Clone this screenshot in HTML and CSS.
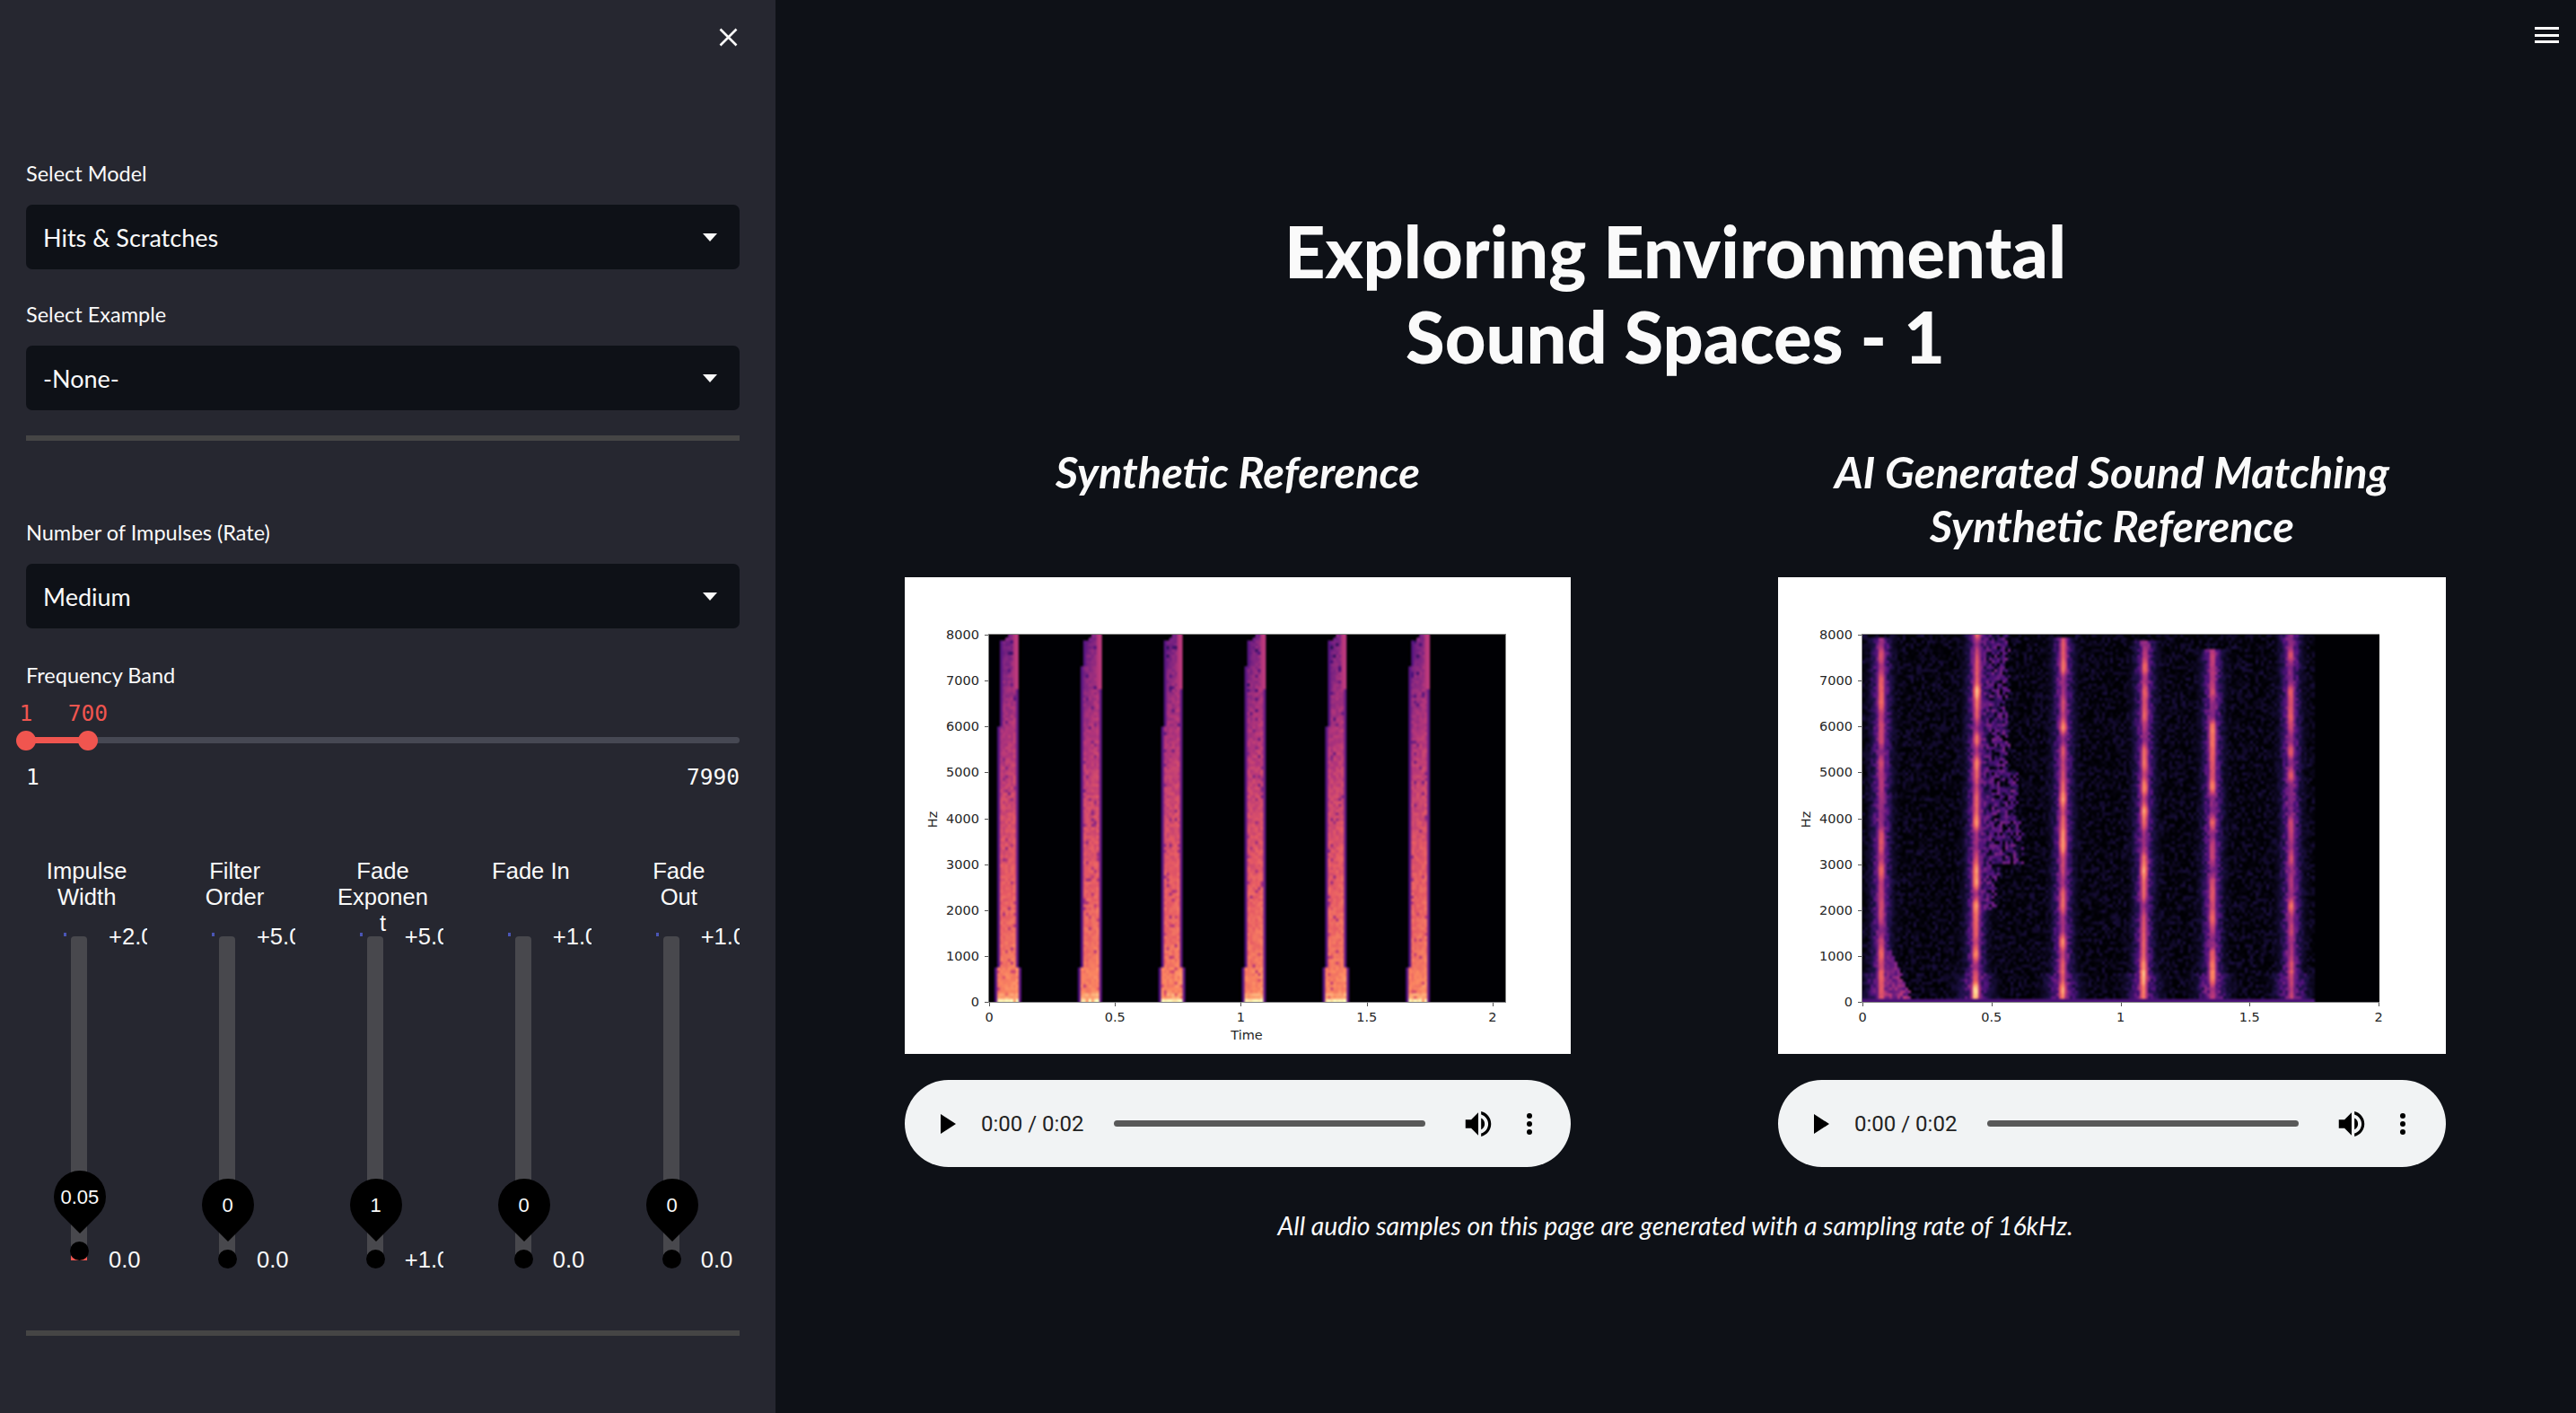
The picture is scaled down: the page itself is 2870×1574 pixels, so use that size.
FILE: index.html
```html
<!DOCTYPE html>
<html lang="en">
<head>
    <meta charset="UTF-8">
    <title>Exploring Environmental Sound Spaces - 1</title>
    <link rel="stylesheet" href="styles.css">
</head>
<body>
    <aside class="sidebar">
        <div class="close-row">
            <svg class="close-icon" viewBox="0 0 21 21"><path d="M1.5 1.5l18 18M19.5 1.5l-18 18"/></svg>
        </div>

        <div class="field first-field">
            <div class="label">Select Model</div>
            <div class="select">Hits &amp; Scratches<span class="arrow"></span></div>
        </div>
        <div class="field">
            <div class="label">Select Example</div>
            <div class="select">-None-<span class="arrow"></span></div>
        </div>
        <hr class="divider">

        <div class="field impulses-field">
            <div class="label">Number of Impulses (Rate)</div>
            <div class="select">Medium<span class="arrow"></span></div>
        </div>

        <div class="label band-label">Frequency Band</div>
        <div class="range">
            <div class="range-values">
                <span class="range-value" style="left:0px">1</span>
                <span class="range-value" style="left:69px">700</span>
            </div>
            <div class="range-track">
                <div class="range-fill" style="width:69px"></div>
                <div class="range-thumb" style="left:0px"></div>
                <div class="range-thumb" style="left:69px"></div>
            </div>
            <div class="range-limits"><span>1</span><span>7990</span></div>
        </div>

        <div class="vsliders">
            <div class="vcol">
                <div class="vtitle">Impulse Width</div>
                <div class="vslider">
                    <span class="vdot"></span>
                    <div class="vtrack vtrack-filled"></div>
                    <div class="vthumb" style="bottom:14px"><div class="bubble"><span>0.05</span></div></div>
                    <div class="vlimits"><span>+2.0</span><span>0.0</span></div>
                </div>
            </div>
            <div class="vcol">
                <div class="vtitle">Filter Order</div>
                <div class="vslider">
                    <span class="vdot"></span>
                    <div class="vtrack"></div>
                    <div class="vthumb" style="bottom:5px"><div class="bubble"><span>0</span></div></div>
                    <div class="vlimits"><span>+5.0</span><span>0.0</span></div>
                </div>
            </div>
            <div class="vcol">
                <div class="vtitle">Fade Exponent</div>
                <div class="vslider">
                    <span class="vdot"></span>
                    <div class="vtrack"></div>
                    <div class="vthumb" style="bottom:5px"><div class="bubble"><span>1</span></div></div>
                    <div class="vlimits"><span>+5.0</span><span>+1.0</span></div>
                </div>
            </div>
            <div class="vcol">
                <div class="vtitle">Fade In</div>
                <div class="vslider">
                    <span class="vdot"></span>
                    <div class="vtrack"></div>
                    <div class="vthumb" style="bottom:5px"><div class="bubble"><span>0</span></div></div>
                    <div class="vlimits"><span>+1.0</span><span>0.0</span></div>
                </div>
            </div>
            <div class="vcol">
                <div class="vtitle">Fade Out</div>
                <div class="vslider">
                    <span class="vdot"></span>
                    <div class="vtrack"></div>
                    <div class="vthumb" style="bottom:5px"><div class="bubble"><span>0</span></div></div>
                    <div class="vlimits"><span>+1.0</span><span>0.0</span></div>
                </div>
            </div>
        </div>
        <hr class="divider divider-bottom">
    </aside>

    <main class="content">
        <div class="menu-icon"><span></span><span></span><span></span></div>
        <h1>Exploring Environmental<br>Sound Spaces - 1</h1>

        <div class="columns">
            <section class="column">
                <h3>Synthetic Reference</h3>
                <figure class="plot">
                    <div class="axes" id="plotReference" data-kind="reference" data-xspan="2.05">
                        <canvas width="575" height="409"></canvas>
                        <span class="axis-name time-name">Time</span>
                        <span class="axis-name hz-name">Hz</span>
                    </div>
                </figure>
                <div class="audio">
                    <span class="play"></span>
                    <span class="time">0:00 / 0:02</span>
                    <span class="progress"></span>
                    <svg class="volume" viewBox="0 0 24 24"><path d="M3 9v6h4l5 5V4L7 9H3zm13.5 3c0-1.77-1.02-3.29-2.5-4.03v8.05c1.48-.73 2.5-2.25 2.5-4.02zM14 3.23v2.06c2.89.86 5 3.54 5 6.71s-2.11 5.85-5 6.71v2.06c4.01-.91 7-4.49 7-8.77 0-4.28-2.99-7.86-7-8.77z"/></svg>
                    <span class="dots"><i></i><i></i><i></i></span>
                </div>
            </section>

            <section class="column">
                <h3>AI Generated Sound Matching<br>Synthetic Reference</h3>
                <figure class="plot">
                    <div class="axes" id="plotGenerated" data-kind="generated" data-xspan="2">
                        <canvas width="576" height="409"></canvas>
                        <span class="axis-name hz-name">Hz</span>
                    </div>
                </figure>
                <div class="audio">
                    <span class="play"></span>
                    <span class="time">0:00 / 0:02</span>
                    <span class="progress"></span>
                    <svg class="volume" viewBox="0 0 24 24"><path d="M3 9v6h4l5 5V4L7 9H3zm13.5 3c0-1.77-1.02-3.29-2.5-4.03v8.05c1.48-.73 2.5-2.25 2.5-4.02zM14 3.23v2.06c2.89.86 5 3.54 5 6.71s-2.11 5.85-5 6.71v2.06c4.01-.91 7-4.49 7-8.77 0-4.28-2.99-7.86-7-8.77z"/></svg>
                    <span class="dots"><i></i><i></i><i></i></span>
                </div>
            </section>
        </div>

        <p class="caption">All audio samples on this page are generated with a sampling rate of 16kHz.</p>
    </main>

    <script src="spectrogram.js"></script>
</body>
</html>
```

FILE: styles.css
```css
* {
    box-sizing: border-box;
}
html, body {
    margin: 0;
    height: 100%;
}
body {
    display: flex;
    height: 1574px;
    overflow: hidden;
    background-color: #0e1117;
    color: #fafafa;
    font-family: Lato, "Noto Sans", sans-serif;
}

/* sidebar */
.sidebar {
    width: 864px;
    flex: none;
    padding: 0 40px 0 29px;
    background-color: #262730;
}
.close-row {
    display: flex;
    justify-content: flex-end;
    padding: 31px 2px 0 0;
    height: 175px;
}
.close-icon {
    width: 21px;
    height: 21px;
    fill: none;
    stroke: #fafafa;
    stroke-width: 2.6;
}
.label {
    height: 36px;
    line-height: 36px;
    font-size: 23.5px;
}
.field {
    margin-bottom: 32px;
}
.select {
    display: flex;
    align-items: center;
    justify-content: space-between;
    height: 72px;
    margin-top: 17px;
    padding: 0 25px 0 19px;
    background-color: #0e1117;
    border-radius: 7px;
    font-size: 27px;
}
.arrow {
    width: 0;
    height: 0;
    border-left: 8px solid transparent;
    border-right: 8px solid transparent;
    border-top: 9px solid #fafafa;
}
.divider {
    height: 6px;
    margin: -4px 0 0;
    border: none;
    background-color: #454545;
}
.impulses-field {
    margin-top: 84px;
    margin-bottom: 34px;
}

/* range slider */
.range {
    font-family: "DejaVu Sans Mono", monospace;
    font-size: 24.5px;
}
.range-values {
    position: relative;
    height: 30px;
    margin-top: 10px;
    line-height: 30px;
    color: #f0554f;
}
.range-value {
    position: absolute;
    transform: translateX(-50%);
}
.range-track {
    position: relative;
    height: 7px;
    margin-top: 11px;
    background-color: #464853;
    border-radius: 4px;
}
.range-fill {
    height: 100%;
    background-color: #f0554f;
}
.range-thumb {
    position: absolute;
    top: -7.5px;
    width: 22px;
    height: 22px;
    margin-left: -11px;
    background-color: #f0554f;
    border-radius: 50%;
}
.range-limits {
    display: flex;
    justify-content: space-between;
    height: 30px;
    margin-top: 23px;
    line-height: 30px;
}

/* the five vertical sliders */
.vsliders {
    display: grid;
    grid-template-columns: repeat(5, minmax(0, 1fr));
    column-gap: 29.6px;
    margin-top: 75px;
    font-family: "Liberation Sans", Arial, sans-serif;
    font-size: 25.6px;
    line-height: 29px;
}
.vtitle {
    height: 73px;
    padding: 0 16px;
    text-align: center;
    overflow-wrap: anywhere;
}
.vslider {
    position: relative;
    display: flex;
    height: 389px;
    overflow: hidden;
}
.vdot {
    position: absolute;
    top: 10px;
    left: 42px;
    width: 3px;
    height: 4px;
    background-color: #4a55b5;
}
.vtrack {
    flex: none;
    width: 18px;
    height: 355px;
    margin: 14px 0 0 50px;
    background-color: #48484d;
    border-radius: 4px 4px 0 0;
}
.vtrack-filled {
    height: 361px;
    background: linear-gradient(#48484d 354px, #f0554f 354px);
}
.vlimits {
    display: flex;
    flex-direction: column;
    justify-content: space-between;
    margin-left: 24px;
    white-space: nowrap;
}
.vthumb {
    position: absolute;
    left: 49px;
    width: 21px;
    height: 21px;
    background-color: #000;
    border-radius: 50%;
}
.bubble {
    position: absolute;
    left: -18px;
    top: -79px;
    width: 58px;
    height: 58px;
    display: flex;
    align-items: center;
    justify-content: center;
    background-color: #000;
    border-radius: 50% 50% 0 50%;
    transform: rotate(45deg);
    font-size: 22px;
}
.bubble span {
    transform: rotate(-45deg);
}
.divider-bottom {
    margin-top: 64px;
}

/* main area */
.content {
    position: relative;
    flex: 1;
    min-width: 0;
    padding: 232px 145px 0 144px;
    text-align: center;
}
.menu-icon {
    position: absolute;
    top: 30px;
    right: 19px;
    display: flex;
    flex-direction: column;
    gap: 4.5px;
    width: 27px;
}
.menu-icon span {
    height: 3px;
    background-color: #fff;
}
h1 {
    margin: 0;
    font-size: 79.3px;
    font-weight: 900;
    line-height: 95px;
}
.columns {
    display: grid;
    grid-template-columns: 742px 744px;
    justify-content: space-between;
    margin-top: 73px;
}
h3 {
    height: 120px;
    margin: 0 0 28px;
    font-size: 48.7px;
    font-style: italic;
    font-weight: 700;
    line-height: 60px;
}
.plot {
    height: 531px;
    margin: 0;
    padding: 64px 0 0 94px;
    background-color: #fff;
}
.axes {
    position: relative;
    width: 575px;
    height: 409px;
    box-shadow: 0 0 0 1px #808080;
    color: #262626;
    font-family: "DejaVu Sans", sans-serif;
    font-size: 14.5px;
}
canvas {
    display: block;
}
.tick {
    position: absolute;
    background-color: #555;
}
.tick-y {
    left: -5px;
    width: 4px;
    height: 1px;
}
.tick-x {
    bottom: -5px;
    width: 1px;
    height: 4px;
}
.tick-label {
    position: absolute;
    white-space: nowrap;
    line-height: 16px;
}
.tick-label-y {
    right: calc(100% + 11px);
    transform: translateY(-50%);
}
.tick-label-x {
    top: calc(100% + 9px);
    transform: translateX(-50%);
}
.axis-name {
    position: absolute;
    line-height: 16px;
}
.time-name {
    left: 287px;
    top: 446px;
    transform: translate(-50%, -50%);
}
.hz-name {
    left: -63px;
    top: 206px;
    transform: translate(-50%, -50%) rotate(-90deg);
}
.audio {
    display: flex;
    align-items: center;
    height: 97px;
    margin-top: 29px;
    padding-left: 40px;
    background-color: #f1f3f4;
    border-radius: 49px;
    color: #222;
    font-family: Roboto, sans-serif;
    font-size: 24px;
}
.play {
    flex: none;
    width: 0;
    height: 0;
    border-top: 11px solid transparent;
    border-bottom: 11px solid transparent;
    border-left: 17px solid #000;
}
.time {
    flex: none;
    width: 148px;
    margin-left: 28px;
    text-align: left;
}
.progress {
    flex: none;
    width: 347px;
    height: 7px;
    background-color: #595959;
    border-radius: 4px;
}
.volume {
    flex: none;
    width: 38px;
    height: 38px;
    margin-left: 40px;
    fill: #000;
}
.dots {
    display: flex;
    flex-direction: column;
    gap: 3px;
    margin-left: 35px;
}
.dots i {
    display: block;
    width: 6px;
    height: 6px;
    background-color: #000;
    border-radius: 50%;
}
.caption {
    margin: 47px 0 0;
    font-size: 28.4px;
    font-style: italic;
    line-height: 36px;
}
```

FILE: spectrogram.js
```js
// magma colormap stops
const MAGMA = [
    [0, 0, 4], [28, 16, 68], [79, 18, 123], [129, 37, 129], [181, 54, 122],
    [229, 89, 100], [251, 135, 97], [254, 194, 135], [252, 253, 191]
];

function magma(v) {
    v = Math.max(0, Math.min(1, v)) * (MAGMA.length - 1);
    const i = Math.min(Math.floor(v), MAGMA.length - 2);
    const t = v - i;
    return MAGMA[i].map((c, k) => c + (MAGMA[i + 1][k] - c) * t);
}

function makeRandom(seed) {
    return function () {
        seed = (seed + 0x6d2b79f5) | 0;
        let t = Math.imul(seed ^ (seed >>> 15), 1 | seed);
        t = (t + Math.imul(t ^ (t >>> 7), 61 | t)) ^ t;
        return ((t ^ (t >>> 14)) >>> 0) / 4294967296;
    };
}

// smooth random curve along the frequency axis
function wobble(random, size, step) {
    const knots = [];
    for (let i = 0; i <= size / step + 1; i++) knots.push(random());
    return function (y) {
        const p = y / step;
        const i = Math.floor(p);
        const t = p - i;
        const s = t * t * (3 - 2 * t);
        return knots[i] + (knots[i + 1] - knots[i]) * s;
    };
}

const random = makeRandom(11);

const REF_STRIPES = [7, 99, 190, 282, 373, 465];

function referenceValue(x, f) {
    for (const start of REF_STRIPES) {
        const dx = x - start;
        const low = f < 750;
        const left = low ? 0 : (f > 4000 ? 2 + 3 * (f - 4000) / 4000 : 2);
        const right = low ? 28 : 26;
        if (dx < left || dx > right) continue;
        if (f > 7850 && dx < 12) return 0;
        if (f > 7950 && dx < 15) return 0;
        if (dx > right - 5 && f > 6800) return 0.5;
        if (dx > right - 3) return 0.3;
        if (dx < left + 3) return 0.26;

        const drop = 1 - f / 8000;
        let level = 0.36 + 0.36 * Math.pow(drop, 0.8) + (low ? 0.02 : 0);
        if (f < 70) level = 0.96;
        else if (f < 170) level = 0.8;
        const high = Math.max(0, (f - 5000) / 3000);
        const across = (dx - left) / (right - left);
        level *= (0.98 - 0.2 * high) + (0.06 + 0.3 * high) * across;
        return level + (random() - 0.5) * 0.08 - (random() < 0.06 ? 0.15 : 0);
    }
    return 0;
}

const GEN_STRIPES = [
    { x: 21, tilt: 0, top: 7950, gain: 0.82 },
    { x: 126, tilt: 2, top: 8000, gain: 0.95 },
    { x: 223, tilt: 1, top: 7950, gain: 0.9 },
    { x: 313, tilt: 2, top: 7900, gain: 0.88 },
    { x: 390, tilt: 0, top: 7700, gain: 0.82 },
    { x: 478, tilt: -1, top: 8000, gain: 0.78 }
].map(s => ({ ...s, blobs: wobble(random, 8000, 260) }));

function generatedValue(x, f) {
    if (x > 505) return 0;
    if (f < 45) return 0.24;
    let v = random() < 0.5 ? 0 : 0.02 + random() * 0.08;

    GEN_STRIPES.forEach((s, n) => {
        const dx = x - (s.x + s.tilt * f / 8000);
        const fade = f > s.top ? 0 : 1;
        const boost = f < 700 ? 1.12 : 1;
        const core = (0.46 + 0.46 * s.blobs(f)) * s.gain * boost * Math.exp(-dx * dx / (2 * 3.8 * 3.8));
        const width = f < 600 ? 12 : 8;
        const halo = 0.32 * Math.exp(-dx * dx / (2 * width * width));
        v = Math.max(v, Math.max(core, halo * (0.6 + 0.8 * random())) * fade);

        // wash of noise behind the second hit
        if (n === 1 && dx > 0 && f > 2000) {
            let reach = 30;
            if (f > 3000 && f < 4000) reach = 50;
            else if (f >= 4000) reach = f < 5000 ? 44 : 34;
            else if (f <= 3000) reach = 18 + (f - 2000) / 140;
            if (dx < reach + random() * 8 - 4 && random() > 0.25) v = Math.max(v, 0.15 + random() * 0.2);
        }
        // first hit rings on at the bottom
        if (n === 0 && dx > 0 && f < 1100) {
            const reach = 32 - f / 50;
            if (dx < reach + random() * 5) v = Math.max(v, 0.28 + random() * 0.26 * (1 - f / 1400));
        }
    });
    return v + (random() - 0.5) * 0.04;
}

function paint(canvas, valueAt) {
    const cellX = 3;
    const cellY = 3.2;
    const cols = Math.ceil(canvas.width / cellX);
    const rows = Math.ceil(canvas.height / cellY);
    const low = document.createElement('canvas');
    low.width = cols;
    low.height = rows;
    const lowCtx = low.getContext('2d');
    const image = lowCtx.createImageData(cols, rows);

    for (let r = 0; r < rows; r++) {
        const f = 8000 * (1 - (r + 0.5) / rows);
        for (let c = 0; c < cols; c++) {
            const rgb = magma(valueAt((c + 0.5) * cellX, f));
            const at = (r * cols + c) * 4;
            image.data[at] = rgb[0];
            image.data[at + 1] = rgb[1];
            image.data[at + 2] = rgb[2];
            image.data[at + 3] = 255;
        }
    }
    lowCtx.putImageData(image, 0, 0);

    const ctx = canvas.getContext('2d');
    ctx.imageSmoothingEnabled = true;
    ctx.imageSmoothingQuality = 'high';
    ctx.drawImage(low, 0, 0, canvas.width, canvas.height);
}

function addTicks(axes) {
    const span = Number(axes.dataset.xspan);
    const width = axes.offsetWidth;
    const height = axes.offsetHeight;

    for (let hz = 0; hz <= 8000; hz += 1000) {
        const y = (1 - hz / 8000) * height;
        axes.insertAdjacentHTML('beforeend',
            `<span class="tick tick-y" style="top:${y}px"></span>` +
            `<span class="tick-label tick-label-y" style="top:${y}px">${hz}</span>`);
    }
    [0, 0.5, 1, 1.5, 2].forEach(t => {
        const x = t / span * width;
        axes.insertAdjacentHTML('beforeend',
            `<span class="tick tick-x" style="left:${x}px"></span>` +
            `<span class="tick-label tick-label-x" style="left:${x}px">${t}</span>`);
    });
}

document.querySelectorAll('.axes').forEach(axes => {
    const valueAt = axes.dataset.kind === 'reference' ? referenceValue : generatedValue;
    paint(axes.querySelector('canvas'), valueAt);
    addTicks(axes);
});
```
